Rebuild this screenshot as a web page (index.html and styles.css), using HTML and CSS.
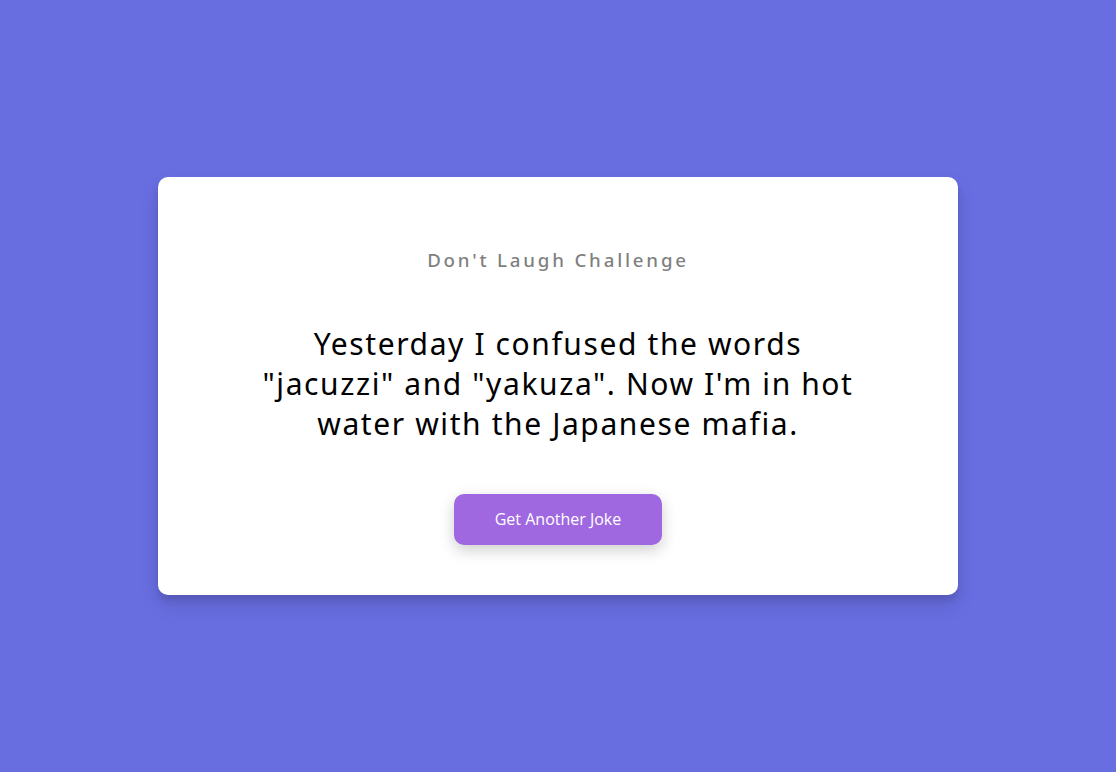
FILE: index.html
```html
<!DOCTYPE html>
<html lang="en">
<head>
<meta charset="UTF-8">
<title>Dad Jokes</title>
<link rel="stylesheet" href="styles.css">
</head>
<body>
<div class="container">
  <h3 class="title">Don't Laugh Challenge</h3>
  <div class="joke">Yesterday I confused the words "jacuzzi" and "yakuza". Now I'm in hot water with the Japanese mafia.</div>
  <button class="btn">Get Another Joke</button>
</div>
</body>
</html>
```
FILE: styles.css
```css
* { box-sizing: border-box; }
body {
  margin: 0;
  height: 100vh;
  background: #686de0;
  font-family: "Noto Sans", "Open Sans", sans-serif;
  display: flex;
  align-items: center;
  justify-content: center;
  overflow: hidden;
}
.container {
  background: #fff;
  border-radius: 10px;
  box-shadow: 0 10px 20px rgba(0,0,0,0.1), 0 6px 6px rgba(0,0,0,0.1);
  padding: 50px 20px;
  text-align: center;
  width: 800px;
}
.title {
  margin: 18.72px 0;
  font-size: 18.72px;
  line-height: 28px;
  font-weight: 500;
  letter-spacing: 2.8px;
  color: #000;
  opacity: 0.5;
}
.joke {
  font-size: 30px;
  letter-spacing: 1.6px;
  line-height: 40px;
  margin: 50px auto;
  max-width: 610px;
  color: #000;
}
.btn {
  background: #9f68e0;
  color: #fff;
  border: 0;
  border-radius: 10px;
  box-shadow: 0 5px 15px rgba(0,0,0,0.2);
  padding: 14px 41px;
  font-family: "Open Sans", sans-serif;
  font-size: 16px;
  line-height: 23px;
  cursor: pointer;
}
```
